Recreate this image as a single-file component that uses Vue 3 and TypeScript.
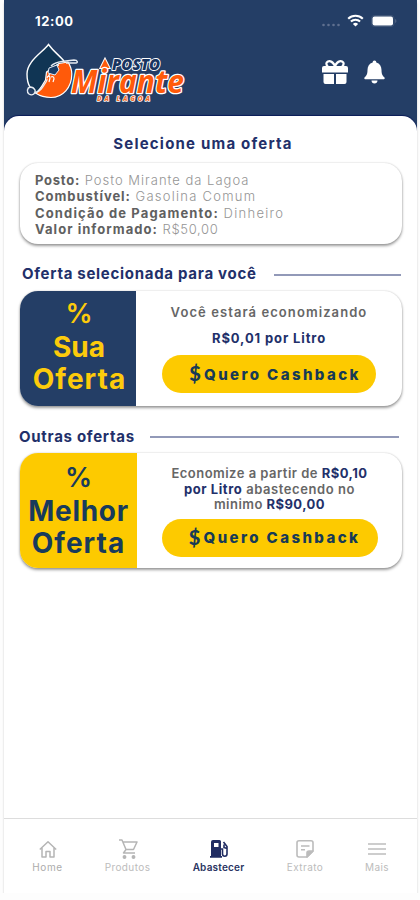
<script setup lang="ts">
interface Detail {
  label: string
  value: string
  tone: string
}

const details: Detail[] = [
  { label: 'Posto:', value: 'Posto Mirante da Lagoa', tone: 'd-posto' },
  { label: 'Combustível:', value: 'Gasolina Comum', tone: 'd-comb' },
  { label: 'Condição de Pagamento:', value: 'Dinheiro', tone: 'd-cond' },
  { label: 'Valor informado:', value: 'R$50,00', tone: 'd-valor' },
]
</script>

<template>
  <div class="phone">
    <header class="header">
      <div class="status">
        <span class="clock">12:00</span>
        <div class="signals">
          <svg class="dots" width="20" height="4" viewBox="0 0 20 4" fill="#5f708f">
            <circle cx="2.5" cy="2" r="1.3" /><circle cx="7.5" cy="2" r="1.3" /><circle cx="12.5" cy="2" r="1.3" /><circle cx="17.5" cy="2" r="1.3" />
          </svg>
          <svg class="wifi" width="17" height="13" viewBox="0 0 17 13" fill="none" stroke="#fff" stroke-width="2.1">
            <path d="M1.2 4.7C5.2.7 11.8.7 15.8 4.7" /><path d="M3.9 7.6c2.6-2.5 6.6-2.5 9.2 0" />
            <path d="M8.500 12.500L5.900 9.900c1.500-1.400 3.700-1.400 5.200 0z" fill="#fff" stroke="none" />
          </svg>
          <svg class="battery" width="26" height="12" viewBox="0 0 26 12">
            <rect x=".5" y=".5" width="22.500" height="11" rx="3" fill="none" stroke="#3f5577" />
            <rect x="1.500" y="1.500" width="20.500" height="9" rx="2" fill="#fff" />
            <path d="M24.300 4v4c1.400-.6 1.400-3.400 0-4z" fill="#5f708f" />
          </svg>
        </div>
      </div>
      <div class="brand">
        <svg class="logo" width="164" height="64" viewBox="0 0 164 64">
          <path d="M24.500 2.500C18 11 3 19 3 32c0 7 2 12 5 16l5 3 11-10 2-13 14-8C35 14 30 10 24.500 2.500z" fill="#103554" />
          <path d="M35 21.500l9-1.500c2.500 4 3.800 8 3.800 12 0 13.500-9 23.500-20.800 23.500-6 0-11-1.500-15.500-4.500 5-3 7-8 10-13l1-8z" fill="#ff5a0a" stroke="#fff" stroke-width="1.200" stroke-linejoin="round" />
          <path d="M40 19C35 13 30 10 24.500 2.500 18 11 3 19 3 32c0 6 .5 9 3 13" fill="none" stroke="#fff" stroke-width="1.400" />
          <path d="M6 45c-3 1-3.500 5-1 7 3 2 7 0 6-4-1-2-3-3-5-3zM11 51c5-1 8-6 11-11l4-9c1-4 4-7 9-8M27 24c3-3 7-4 11-4.500l12-1.500c4 0 4 3 2 3H42" fill="none" stroke="#e6ebf2" stroke-width="1.400" />
          <path d="M25 26l8-3 2 5-4 5-7-2z" fill="#183c65" stroke="#e6ebf2" />
          <path d="M23 36c1-3 3-2 3 0l-1 4m2-5c2-1 3 0 3 2l-1 3" stroke="#fff" stroke-width="1.200" fill="#ff5a0a" />
          <path d="M81 17l-4.500 9h9z" fill="#ff5a0a" stroke="#fff" stroke-width="2" paint-order="stroke" />
          <text class="posto" x="88" y="28" textLength="48" lengthAdjust="spacingAndGlyphs">POSTO</text>
          <text class="mirante" x="47" y="51" textLength="113" lengthAdjust="spacingAndGlyphs">Mirante</text>
          <text class="lagoa" x="73" y="58.500" textLength="53">DA LAGOA</text>
        </svg>
        <div class="actions">
          <svg width="26" height="25" viewBox="0 0 26 25">
            <path d="M6 7C2.500 3 5.500.8 8.500 1.300 11 1.800 12 4 13 6c1-2 2-4.200 4.500-4.700C20.500.8 23.500 3 20 7" fill="none" stroke="#fff" stroke-width="2.200" />
            <path d="M2 6h22q2 0 2 2v4.500H0V8q0-2 2-2zM1.500 14h10.500v10H3.500q-2 0-2-2zM14 14h10.500v8q0 2-2 2H14z" fill="#fff" />
          </svg>
          <svg width="21" height="24" viewBox="0 0 21 24" fill="#fff">
            <path d="M10.500.5c1.200 0 1.800.8 1.800 1.900 3.500.9 5.200 3.800 5.200 7.600 0 4.500 1.300 6 2.800 7.300.8.900.3 2-.8 2H1.500c-1.100 0-1.600-1.100-.8-2C2.200 16 3.500 14.500 3.500 10c0-3.800 1.700-6.700 5.200-7.600 0-1.100.6-1.900 1.800-1.900zM7.500 20.500h6c0 1.800-1.300 3-3 3s-3-1.200-3-3z" />
          </svg>
        </div>
      </div>
    </header>

    <main class="sheet">
      <h1 class="title">Selecione uma oferta</h1>
      <section class="card info">
        <p v-for="d in details" :key="d.label" :class="d.tone"><b>{{ d.label }}</b> <span>{{ d.value }}</span></p>
      </section>

      <div class="heading first"><h2>Oferta selecionada para você</h2><i></i></div>
      <section class="card offer navy">
        <div class="badge"><span>%</span><span class="w1">Sua</span><span class="w2">Oferta</span></div>
        <div class="body">
          <p class="line l1">Você estará economizando</p>
          <p class="line l2"><b>R$0,01 por Litro</b></p>
          <button><em>$</em><span>Quero Cashback</span></button>
        </div>
      </section>

      <div class="heading second"><h2>Outras ofertas</h2><i></i></div>
      <section class="card offer gold">
        <div class="badge"><span>%</span><span class="w3">Melhor</span><span class="w2">Oferta</span></div>
        <div class="body">
          <p class="line m1">Economize a partir de <b>R$0,10</b></p>
          <p class="line m2"><b>por Litro</b> abastecendo no</p>
          <p class="line m3">minimo <b>R$90,00</b></p>
          <button><em>$</em><span>Quero Cashback</span></button>
        </div>
      </section>
    </main>

    <nav class="tabs">
      <a class="t-home">
        <svg width="20" height="20" viewBox="0 0 20 20" fill="none" stroke="#b5b5b5" stroke-width="1.500" stroke-linejoin="round">
          <path d="M1.800 10.500L10 2.700l8.200 7.800M4 9v9h4v-5.500h4V18h4V9" />
        </svg>
        <span>Home</span>
      </a>
      <a class="t-prod">
        <svg width="20" height="20" viewBox="0 0 20 20" fill="none" stroke="#b5b5b5" stroke-width="1.500" stroke-linejoin="round">
          <path d="M1 1h3l4 9.500h7.500L19 3H5M8 10.500L5.500 14H17" /><circle cx="6.500" cy="18" r="1.200" fill="#b5b5b5" /><circle cx="15.500" cy="18" r="1.200" fill="#b5b5b5" />
        </svg>
        <span>Produtos</span>
      </a>
      <a class="t-fuel">
        <svg width="20" height="20" viewBox="0 0 20 20">
          <path fill-rule="evenodd" d="M4 1h6.500q1.500 0 1.500 1.500V17h1v1.800H1V17h1V3q0-2 2-2zm1 3v4h4.500V4z" fill="#202c62" />
          <path d="M12 10h1.500v5c0 3 4.500 3 4.500 0V7.500L14.500 3M15 5.500v3l3 1" fill="none" stroke="#202c62" stroke-width="1.600" />
        </svg>
        <span>Abastecer</span>
      </a>
      <a class="t-ext">
        <svg width="20" height="20" viewBox="0 0 20 20" fill="none" stroke="#bcbcbc" stroke-width="1.600" stroke-linejoin="round">
          <path d="M4 1.800h12q2 0 2 2V12l-6 6H4q-2 0-2-2V3.800q0-2 2-2zM6 7h8.500M6 10.800h4" /><path d="M12 18v-4q0-2 2-2h4z" fill="#bcbcbc" />
        </svg>
        <span>Extrato</span>
      </a>
      <a class="t-more">
        <svg width="20" height="20" viewBox="0 0 20 20" stroke="#bdbdbd" stroke-width="1.700">
          <path d="M1 5h18M1 10h18M1 15h18" />
        </svg>
        <span>Mais</span>
      </a>
    </nav>
  </div>
</template>

<style>
body { background: #fdfdfd; }
</style>

<style scoped>
* { box-sizing: border-box; margin: 0; }
.phone {
  width: 413px; height: 893px; margin-left: 4px; display: flex; flex-direction: column;
  background: linear-gradient(#243e66 200px, #fff 200px); box-shadow: 0 3px 2px #d0d0d0; font-family: Inter, sans-serif;
}
.header { height: 116px; flex: none; }
.status { height: 40px; padding: 1px 20px 0 31px; display: flex; align-items: center; justify-content: space-between; }
.clock { color: #fff; font-size: 13px; font-weight: 700; letter-spacing: .6px; }
.signals { display: flex; align-items: center; }
.dots { margin: 9px 6px 0 0; }
.battery { margin-left: 7px; }
.brand { display: flex; justify-content: space-between; padding: 2px 32px 0 20px; }
.logo { overflow: visible; }
.logo text { font-family: "Open Sans", sans-serif; font-style: italic; font-weight: 800; paint-order: stroke; stroke: #fff; stroke-linejoin: round; }
.logo .posto { font-size: 15px; fill: #17345f; stroke-width: 1.800px; }
.logo .mirante { font-size: 32px; font-weight: 700; fill: #ff5a0a; stroke-width: 2.600px; }
.logo .lagoa { font-size: 6.500px; fill: #f06a2b; stroke-width: 1.500px; }
.actions { display: flex; gap: 16px; padding-top: 18px; }
.sheet { flex: 1; background: #fff; border-radius: 15px 15px 0 0; box-shadow: 0 -1px 1px #0b1c58; clip-path: inset(-3px 0 0 0); padding: 16px 15px 0 16px; }
.title { color: #22306a; font-size: 15px; font-weight: 700; line-height: 23px; height: 22px; text-align: center; letter-spacing: 1.200px; white-space: nowrap; padding-right: 16px; }
.card { border-radius: 18px; background: #fff; box-shadow: 0 2px 3px rgba(0,0,0,.38), 0 0 2px rgba(0,0,0,.2); overflow: hidden; }
.info { height: 81px; margin-top: 9px; padding: 9px 0 0 15px; }
.info p { height: 16.300px; line-height: 16.300px; font-size: 13px; color: #959595; white-space: nowrap; letter-spacing: 1px; font-weight: 300; }
.info b { color: #606060; font-weight: 700; }
.d-posto b { letter-spacing: .75px; }
.d-comb b { letter-spacing: .95px; }
.d-comb span { letter-spacing: 1.250px; }
.d-cond b { letter-spacing: 1.130px; }
.d-cond span { letter-spacing: 1.300px; }
.d-valor b { letter-spacing: 1.050px; }
.d-valor span { letter-spacing: .65px; }
.heading { display: flex; align-items: center; height: 22px; }
.heading h2 { color: #22306a; font-size: 15px; font-weight: 700; white-space: nowrap; letter-spacing: .710px; line-height: 20px; }
.heading i { height: 2px; background: #9299b8; flex: none; margin-left: auto; }
.first { margin: 19px 0 6px; padding: 0 1px 0 2px; }
.first i { width: 127px; margin-top: 2px; }
.second { margin: 20px 0 5px; padding: 0 3px 0 0; }
.second h2 { margin-left: -1px; }
.second i { width: 249px; }
.offer { height: 115px; display: flex; }
.badge { width: 116px; flex: none; display: flex; flex-direction: column; align-items: center; font-size: 28px; font-weight: 700; padding-top: 7px; }
.badge span { line-height: 32.500px; height: 32.500px; white-space: nowrap; }
.badge span:first-child { font-size: 27px; font-weight: 600; padding-left: 2px; }
.badge .w2 { letter-spacing: 1px; }
.badge .w3 { letter-spacing: .7px; }
.navy .badge { background: #243e66; color: #fdcb0b; }
.navy .w1 { padding-left: 2px; }
.navy .w2 { padding-left: 3px; }
.gold .badge { background: #fdca00; color: #183b5c; width: 117px; padding-top: 9px; }
.gold .badge span:first-child { padding-left: 0; }
.body { flex: 1; display: flex; flex-direction: column; align-items: center; color: #666; }
.line { font-size: 13px; font-weight: 600; white-space: nowrap; line-height: 16px; }
.line b { color: #22306a; font-weight: 700; }
.l1 { margin-top: 13px; letter-spacing: 1.080px; }
.l2 { margin-top: 10px; letter-spacing: .880px; }
.m1 { margin-top: 12px; letter-spacing: .480px; }
.m2 { letter-spacing: .570px; }
.m3 { letter-spacing: .450px; }
.m1, .m2, .m3 { height: 15.500px; }
button { border: 0; padding: 0 0 0 24px; background: #fdca00; color: #173a56; width: 214px; height: 38px; border-radius: 19px; display: flex; align-items: center; font-family: Inter, sans-serif; white-space: nowrap; margin-top: 9px; }
.gold button { width: 216px; margin-top: 7px; }
em { font: 900 20px/24px Lato, sans-serif; width: 18px; margin-top: -2px; }
button span { font-size: 15px; font-weight: 800; letter-spacing: 2.400px; }
.tabs { height: 75px; flex: none; background: #fff; border-top: 1px solid #ddd; display: grid; grid-template-columns: 87px 73px 109px 64px 80px; padding-top: 20px; }
.tabs a { display: flex; flex-direction: column; align-items: center; color: #bcbcbc; font-size: 10px; line-height: 13px; gap: 2px; letter-spacing: .4px; }
.tabs .t-home { color: #acacac; letter-spacing: .6px; }
.tabs .t-fuel { color: #2a3562; font-weight: 600; letter-spacing: .2px; }
</style>
